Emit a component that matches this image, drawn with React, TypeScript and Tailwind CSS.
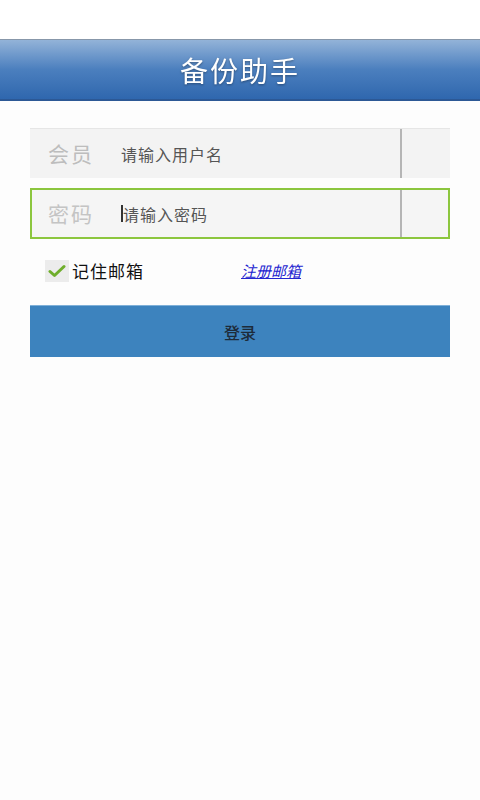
import React, { useState } from 'react';

const font = { fontFamily: '"Noto Sans CJK SC", "Liberation Sans", sans-serif' };

const App: React.FC = () => {
  const [remember, setRemember] = useState(true);
  const [user, setUser] = useState('');
  const [pwd, setPwd] = useState('');

  return (
    <div className="w-[480px] h-[800px] bg-[#fdfdfd] flex flex-col" style={font}>
      {/* Status bar area */}
      <div className="h-[39px] bg-white" />

      {/* Title bar */}
      <div className="h-[62px] flex items-center justify-center border-t border-[#8797aa] border-b-2 border-b-[#2c5895] bg-gradient-to-b from-[#93b3d8] via-[#4b7fbe] to-[#2f67ae]">
        <h1 className="text-[28px] text-white tracking-[2px] drop-shadow-[0_1px_1px_rgba(0,0,0,0.35)]">备份助手</h1>
      </div>

      <div className="px-[30px] pt-[27px] flex flex-col">
        {/* Username */}
        <div className="h-[50px] bg-[#f3f3f3] border-t border-[#e6e6e6] flex items-center">
          <span className="w-[91px] pl-[18px] text-[21px] tracking-[2px] text-[#bdbdbd] shrink-0">会员</span>
          <input
            value={user}
            onChange={(e) => setUser(e.target.value)}
            placeholder="请输入用户名"
            className="flex-1 bg-transparent outline-none text-[16px] tracking-[1px] text-[#333] placeholder:text-[#555]"
          />
          <div className="w-[2px] self-stretch bg-[#b5b5b5]" />
          <div className="w-[48px]" />
        </div>

        {/* Password */}
        <div className="mt-[10px] h-[51px] bg-[#f5f5f5] border-2 border-[#8cc63e] flex items-center">
          <span className="w-[89px] pl-[16px] text-[21px] tracking-[2px] text-[#c4c4c4] shrink-0">密码</span>
          <div className="w-[2px] h-[17px] bg-[#333] shrink-0" />
          <input
            type="password"
            value={pwd}
            onChange={(e) => setPwd(e.target.value)}
            placeholder="请输入密码"
            className="flex-1 bg-transparent outline-none text-[16px] tracking-[1px] text-[#333] placeholder:text-[#555]"
          />
          <div className="w-[2px] self-stretch bg-[#b5b5b5]" />
          <div className="w-[46px]" />
        </div>

        {/* Remember / register */}
        <div className="mt-[19px] h-[26px] flex items-center">
          <button
            onClick={() => setRemember(!remember)}
            className="ml-[15px] w-[24px] h-[22px] bg-[#ececec] flex items-center justify-center"
          >
            {remember && (
              <svg width="18" height="14" viewBox="0 0 18 14">
                <path d="M2 7.5 L6.5 11.5 L16 2.5" fill="none" stroke="#6fae2c" strokeWidth="3" strokeLinecap="round" strokeLinejoin="round" />
              </svg>
            )}
          </button>
          <span className="ml-[3px] text-[17px] text-[#111] tracking-[1px]">记住邮箱</span>
          <a href="#" className="ml-[97px] text-[15px] text-[#2424d0] italic underline">注册邮箱</a>
        </div>

        {/* Login */}
        <button className="mt-[21px] h-[52px] bg-[#3d83be] border-t border-[#7fb0d8] text-[16px] font-medium text-[#1d2b3a]">
          登录
        </button>
      </div>
    </div>
  );
};

export default App;
